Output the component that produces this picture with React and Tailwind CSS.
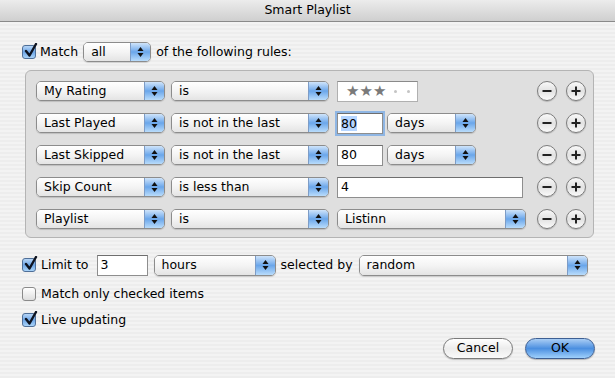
import React from 'react';

const FONT = { fontFamily: '"DejaVu Sans", "Liberation Sans", Arial, sans-serif' };

function Arrows() {
  return (
    <svg width="7" height="12" viewBox="0 0 7 12">
      <path d="M3.5 1 L6.5 5 L0.5 5 Z" fill="#111" />
      <path d="M3.5 11 L6.5 7 L0.5 7 Z" fill="#111" />
    </svg>
  );
}

function PopUp({ label, w, h = 'h-[20px]' }) {
  return (
    <div
      className={`${w} ${h} flex shrink-0 rounded-[5px] border border-[#8c8c8c] overflow-hidden shadow-[0_1px_1px_rgba(0,0,0,0.15)]`}
    >
      <div className="flex-1 flex items-center pl-[7px] bg-gradient-to-b from-[#ffffff] via-[#f4f4f4] to-[#e4e4e4] text-black">
        {label}
      </div>
      <div className="w-[20px] flex items-center justify-center border-l border-[#7d9cc6] bg-gradient-to-b from-[#cfe4fa] via-[#6aa6ea] to-[#b9dcfb]">
        <Arrows />
      </div>
    </div>
  );
}

function Field({ w, children, focus }) {
  return (
    <div
      className={`${w} h-[21px] shrink-0 flex items-center pl-[3px] bg-white border border-[#8e8e8e] border-t-[#6e6e6e] ${
        focus ? 'shadow-[0_0_0_2px_#8fb6e4]' : ''
      }`}
    >
      {children}
    </div>
  );
}

function Check({ on }) {
  return (
    <div
      className={`w-[14px] h-[14px] shrink-0 rounded-[3px] border relative ${
        on
          ? 'border-[#4f6f98] bg-gradient-to-b from-[#b7d6f7] via-[#6ea6e6] to-[#a9d3f8]'
          : 'border-[#8a8a8a] bg-gradient-to-b from-[#ffffff] to-[#dedede]'
      }`}
    >
      {on && (
        <svg className="absolute left-[1px] top-[-3px]" width="14" height="15" viewBox="0 0 14 15">
          <path d="M2 8 L5.5 12.5 L12 1" fill="none" stroke="#0d1320" strokeWidth="2.4" strokeLinecap="round" strokeLinejoin="round" />
        </svg>
      )}
    </div>
  );
}

function Round({ plus }) {
  return (
    <div className="w-[20px] h-[20px] rounded-full border border-[#7c7c7c] bg-gradient-to-b from-[#f9f9f9] via-[#e2e2e2] to-[#fafafa] flex items-center justify-center shadow-[0_1px_1px_rgba(0,0,0,0.2)]">
      <svg width="12" height="12" viewBox="0 0 12 12">
        <path d="M1.5 6 H10.5" stroke="#222" strokeWidth="2" />
        {plus && <path d="M6 1.5 V10.5" stroke="#222" strokeWidth="2" />}
      </svg>
    </div>
  );
}

function Rule({ a, b, children }) {
  return (
    <div className="flex items-center h-[20px]">
      <PopUp label={a} w="w-[129px]" />
      <div className="w-[6px]" />
      <PopUp label={b} w="w-[158px]" />
      <div className="w-[8px]" />
      <div className="flex items-center gap-[4px]">{children}</div>
      <div className="ml-auto flex items-center gap-[9px]">
        <Round />
        <Round plus />
      </div>
    </div>
  );
}

export default function App() {
  return (
    <div
      style={FONT}
      className="w-[615px] h-[378px] flex flex-col text-[12.5px] text-black bg-[repeating-linear-gradient(0deg,#ededed_0px,#ededed_2px,#f3f3f3_2px,#f3f3f3_4px)]"
    >
      {/* title bar */}
      <div className="h-[22px] shrink-0 flex items-center justify-center border-b border-[#8a8a8a] bg-gradient-to-b from-[#ececec] to-[#cfcfcf]">
        Smart Playlist
      </div>

      <div className="flex items-center pl-[22px] pt-[20px] h-[40px] shrink-0">
        <Check on />
        <span className="ml-[4px]">Match</span>
        <div className="ml-[5px]">
          <PopUp label="all" w="w-[68px]" />
        </div>
        <span className="ml-[5px]">of the following rules:</span>
      </div>

      {/* rules panel */}
      <div className="ml-[25px] mt-[8px] w-[569px] h-[168px] shrink-0 rounded-[6px] border border-[#b4b4b4] bg-[#dfdfdf] pt-[10px] pl-[10px] pr-[7px] flex flex-col gap-[12px]">
        <Rule a="My Rating" b="is">
          <div className="w-[81px] h-[21px] bg-white border border-[#b0b0b0] border-t-[#8a8a8a] flex items-center pl-[8px] text-[#7a7a7a] text-[15px] leading-none">
            <span>★★★</span>
            <span className="w-[3px] h-[3px] rounded-full bg-[#c4c4c4] ml-[8px]" />
            <span className="w-[3px] h-[3px] rounded-full bg-[#c4c4c4] ml-[10px]" />
          </div>
        </Rule>
        <Rule a="Last Played" b="is not in the last">
          <Field w="w-[46px]" focus>
            <span className="bg-[#b5d5ff] leading-[15px]">80</span>
          </Field>
          <PopUp label="days" w="w-[89px]" />
        </Rule>
        <Rule a="Last Skipped" b="is not in the last">
          <Field w="w-[46px]">80</Field>
          <PopUp label="days" w="w-[89px]" />
        </Rule>
        <Rule a="Skip Count" b="is less than">
          <Field w="w-[186px]">4</Field>
        </Rule>
        <Rule a="Playlist" b="is">
          <PopUp label="Listinn" w="w-[189px]" />
        </Rule>
      </div>

      {/* options */}
      <div className="flex items-center pl-[22px] mt-[16px] h-[22px] shrink-0">
        <Check on />
        <span className="ml-[5px]">Limit to</span>
        <div className="ml-[8px]">
          <Field w="w-[51px]">3</Field>
        </div>
        <div className="ml-[6px]">
          <PopUp label="hours" w="w-[122px]" h="h-[21px]" />
        </div>
        <span className="ml-[5px]">selected by</span>
        <div className="ml-[6px]">
          <PopUp label="random" w="w-[229px]" h="h-[21px]" />
        </div>
      </div>
      <div className="flex items-center pl-[22px] mt-[10px] h-[16px] shrink-0">
        <Check />
        <span className="ml-[5px]">Match only checked items</span>
      </div>
      <div className="flex items-center pl-[22px] mt-[10px] h-[16px] shrink-0">
        <Check on />
        <span className="ml-[5px]">Live updating</span>
      </div>

      <div className="flex justify-end gap-[12px] pr-[20px] mt-[10px]">
        <div className="w-[70px] h-[21px] rounded-full border border-[#7a7a7a] bg-gradient-to-b from-[#ffffff] via-[#ececec] to-[#fafafa] flex items-center justify-center shadow-[0_1px_1px_rgba(0,0,0,0.2)]">
          Cancel
        </div>
        <div className="w-[70px] h-[21px] rounded-full border border-[#3d5f93] bg-gradient-to-b from-[#a9cdf4] via-[#4b8fe0] to-[#9fd0fb] flex items-center justify-center shadow-[0_1px_1px_rgba(0,0,0,0.25)]">
          OK
        </div>
      </div>
    </div>
  );
}
